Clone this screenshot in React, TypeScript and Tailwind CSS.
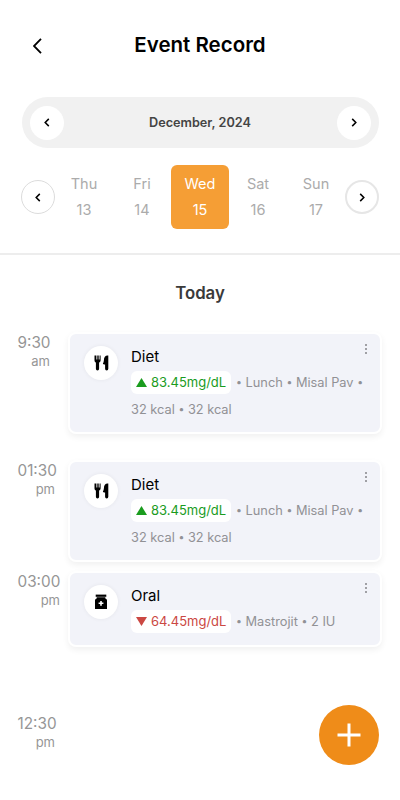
import { Fragment, type ReactNode } from 'react';
import clsx from 'clsx';

interface Day {
  name: string;
  date: number;
  active?: boolean;
}

interface EventRecord {
  time: string;
  period: string;
  title: string;
  kind: 'diet' | 'oral';
  trend: 'up' | 'down';
  reading: string;
  details: string[];
  rowClass: string;
  cardClass: string;
  timeClass: string;
}

const days: Day[] = [
  { name: 'Thu', date: 13 },
  { name: 'Fri', date: 14 },
  { name: 'Wed', date: 15, active: true },
  { name: 'Sat', date: 16 },
  { name: 'Sun', date: 17 },
];

const events: EventRecord[] = [
  {
    time: '9:30',
    period: 'am',
    title: 'Diet',
    kind: 'diet',
    trend: 'up',
    reading: '83.45mg/dL',
    details: ['Lunch', 'Misal Pav', '32 kcal', '32 kcal'],
    rowClass: 'h-32',
    cardClass: 'h-[102px]',
    timeClass: 'w-8',
  },
  {
    time: '01:30',
    period: 'pm',
    title: 'Diet',
    kind: 'diet',
    trend: 'up',
    reading: '83.45mg/dL',
    details: ['Lunch', 'Misal Pav', '32 kcal', '32 kcal'],
    rowClass: 'h-[111px]',
    cardClass: 'h-[102px]',
    timeClass: 'w-[37px]',
  },
  {
    time: '03:00',
    period: 'pm',
    title: 'Oral',
    kind: 'oral',
    trend: 'down',
    reading: '64.45mg/dL',
    details: ['Mastrojit', '2 IU'],
    rowClass: 'h-[142px]',
    cardClass: 'h-[76px]',
    timeClass: 'w-[42px]',
  },
];

function Chevron({ direction }: { direction: 'left' | 'right' }) {
  return (
    <svg viewBox="0 0 6 10" fill="none" stroke="#000" strokeWidth="1.7" className="h-[9px] w-[6px]">
      <path d={direction === 'left' ? 'M5 1 1 5l4 4' : 'M1 1l4 4-4 4'} />
    </svg>
  );
}

function RoundButton({ label, className, children }: { label: string; className?: string; children: ReactNode }) {
  return (
    <button
      aria-label={label}
      className={clsx('flex size-[34px] shrink-0 items-center justify-center rounded-full bg-white', className)}
    >
      {children}
    </button>
  );
}

function DietIcon() {
  return (
    <svg viewBox="0 0 15 16" fill="currentColor" className="h-4 w-[15px] text-black">
      <path d="M.5.6v4.600c0 1.200.5 2 1.400 2.400v6.200a1.600 1.600 0 0 0 3.200 0V7.600C6 7.200 6.600 6.400 6.600 5.200V.6h-1v4h-.9v-4H3.300v4h-.9v-4H1.500z" />
      <path d="M14.300.6h-.8c-2.200 0-3.600 1.900-3.600 4.600-.1 1.400-.6 2.700-1 3.300 0 .6.900 1 2.200 1v4.300a1.600 1.600 0 0 0 3.200 0z" />
    </svg>
  );
}

function MedicineIcon() {
  return (
    <svg viewBox="0 0 16 16" className="size-4">
      <path d="M2.700.6h10.600v2.200H2.700z" fill="#000" />
      <path d="M3.700 3.300h8.600v1.200c1 .3 1.700 1 1.700 2v8.400H2V6.500c0-1 .7-1.700 1.700-2z" fill="#000" />
      <path d="M8 6.900v4.800M5.600 9.300h4.800" stroke="#fff" strokeWidth="1.600" />
    </svg>
  );
}

function Bullet() {
  return <span className="relative -top-px text-[10.500px]">•</span>;
}

function EventTime({ time, period, className }: { time: string; period: string; className: string }) {
  return (
    <div className={clsx('pt-px pl-[0.500px] text-[#969696]', className)}>
      <p className="text-[15.300px] leading-[18px] whitespace-nowrap">{time}</p>
      <p className="-mr-px text-right text-[13px] leading-[18px]">{period}</p>
    </div>
  );
}

function EventCard({ event }: { event: EventRecord }) {
  const up = event.trend === 'up';

  return (
    <article
      className={clsx(
        '-mt-px flex w-[314px] rounded-lg border-2 border-white bg-[#f2f3f9] pt-3 pl-[14px] shadow-[0_3px_6px_rgba(0,0,0,0.06)]',
        event.cardClass
      )}
    >
      <div className="flex size-[34px] shrink-0 items-center justify-center rounded-full bg-white shadow-[0_0_4px_rgba(0,0,0,0.06)]">
        {event.kind === 'diet' ? <DietIcon /> : <MedicineIcon />}
      </div>
      <div className="ml-[13px] w-[232px] shrink-0">
        <h3 className="text-[15px] leading-[21px] text-black">{event.title}</h3>
        <div className="mt-px flex items-center">
          <span
            className={clsx(
              'flex h-[23px] w-[100px] shrink-0 items-center gap-[4px] rounded-md bg-white pl-[5px] text-[13px] leading-none',
              up ? 'text-[#1a9c1e]' : 'text-[#cb4843]'
            )}
          >
            <svg viewBox="0 0 11 9" fill="currentColor" className="h-[9px] w-[11px] shrink-0">
              <path d={up ? 'M5.500 0 11 9H0z' : 'M0 0h11L5.500 9z'} />
            </svg>
            {event.reading}
          </span>
          <span className="relative top-px ml-[5px] text-[12.800px] leading-[27px] whitespace-nowrap text-[#919195]">
            {event.details.slice(0, 2).map((detail) => (
              <Fragment key={detail}>
                <Bullet /> {detail}{' '}
              </Fragment>
            ))}
            {event.details.length > 2 && <Bullet />}
          </span>
        </div>
        {event.details.length > 2 && (
          <p className="pt-px text-[12.800px] leading-[26px] text-[#919195]">
            {event.details[2]} <Bullet /> {event.details[3]}
          </p>
        )}
      </div>
      <button aria-label="More options" className="-mt-[2px] flex h-[10px] w-[5px] flex-col items-center justify-between">
        <span className="size-[2px] bg-[#a0a0a5]" />
        <span className="size-[2px] bg-[#a0a0a5]" />
        <span className="size-[2px] bg-[#a0a0a5]" />
      </button>
    </article>
  );
}

export default function App() {
  return (
    <main className="relative h-[800px] w-[400px] overflow-hidden bg-white font-['Inter',sans-serif]">
      <header className="flex h-[97px] items-center px-8 pb-[6px]">
        <button aria-label="Back" className="w-10">
          <svg viewBox="0 0 9 16" fill="none" stroke="#000" strokeWidth="1.800" className="ml-px h-4 w-[9px]">
            <path d="M8 .8 1 8l7 7.200" />
          </svg>
        </button>
        <h1 className="flex-1 text-center text-[20.500px] font-semibold text-black">Event Record</h1>
        <div className="w-10" />
      </header>

      <div className="mx-auto flex h-[51px] w-[357px] items-center justify-between rounded-full bg-[#f1f1f1] px-2">
        <RoundButton label="Previous month">
          <Chevron direction="left" />
        </RoundButton>
        <span className="text-[12.700px] font-semibold text-[#444]">December, 2024</span>
        <RoundButton label="Next month">
          <Chevron direction="right" />
        </RoundButton>
      </div>

      <div className="mt-[17px] flex h-16 items-center px-[21px]">
        <RoundButton label="Previous days" className="border border-[#dcdcdc]">
          <Chevron direction="left" />
        </RoundButton>
        {days.map((day) => (
          <div
            key={day.name}
            className={clsx(
              'flex h-16 w-[58px] flex-col items-center rounded-md pt-[6px] text-[14.500px] leading-[26px]',
              day.active ? 'bg-[#f59e35] text-white' : 'text-[#ababab]'
            )}
          >
            <span>{day.name}</span>
            <span>{day.date}</span>
          </div>
        ))}
        <RoundButton label="Next days" className="border-2 border-[#e6e6e6]">
          <Chevron direction="right" />
        </RoundButton>
      </div>

      <section className="mt-6 border-t-2 border-[#ededed]">
        <h2 className="pt-[26px] text-center text-[16.800px] leading-6 font-semibold text-[#3a3a3a]">Today</h2>
        <div className="mt-7 pl-[17px]">
          {events.map((event) => (
            <div key={event.time} className={clsx('flex', event.rowClass)}>
              <div className="w-[51px]">
                <EventTime time={event.time} period={event.period} className={event.timeClass} />
              </div>
              <EventCard event={event} />
            </div>
          ))}
          <EventTime time="12:30" period="pm" className="w-[37px]" />
        </div>
      </section>

      <button
        aria-label="Add event"
        className="absolute top-[705px] left-[319px] flex size-[60px] items-center justify-center rounded-full bg-[#ef8c19]"
      >
        <svg viewBox="0 0 24 24" stroke="#fff" strokeWidth="3" className="size-6">
          <path d="M12 .5v23M.5 12h23" />
        </svg>
      </button>
    </main>
  );
}
